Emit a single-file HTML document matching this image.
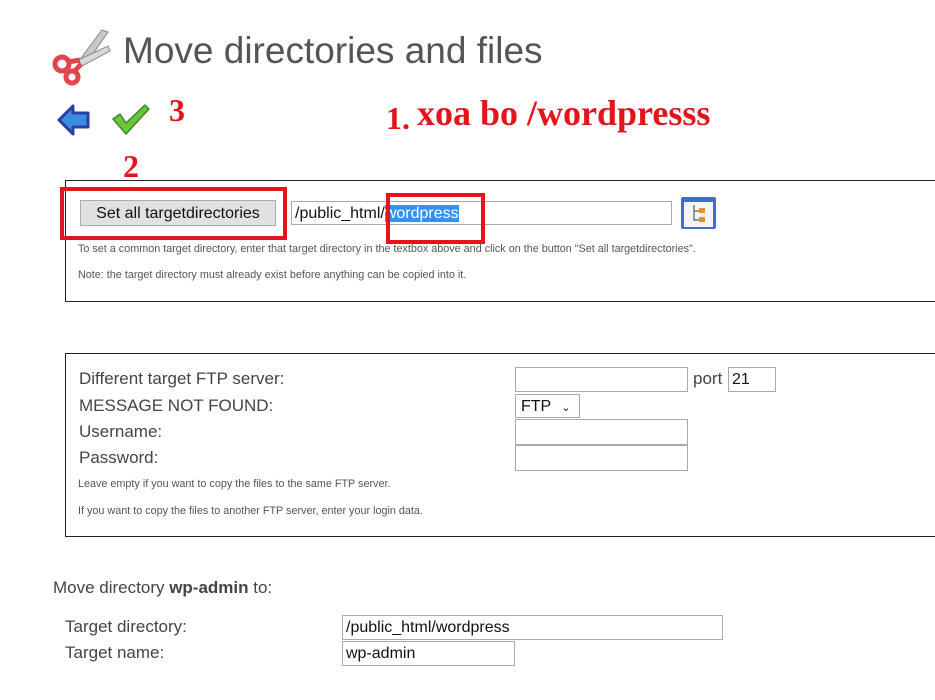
<!DOCTYPE html>
<html><head><meta charset="utf-8"><style>
body{margin:0;width:935px;height:700px;overflow:hidden;background:#fff;font-family:"Liberation Sans",Arial,sans-serif;color:#444;position:relative}
.a{position:absolute;white-space:nowrap}
.red{color:#e5131b;font-family:"Liberation Serif",serif;font-weight:bold}
.box{position:absolute;border:1px solid #222;border-right:none}
.inp{position:absolute;border:1px solid #a9a9a9;background:#fff;box-sizing:border-box;font-size:16px;color:#111;padding-left:3px;line-height:24px}
.sm{font-size:10.8px;color:#555}
.rr{position:absolute;border:4px solid #e5131b;box-sizing:border-box}
.lb{font-size:17px;color:#444}
</style></head><body>
<svg class="a" style="left:50px;top:26px" width="62" height="60" viewBox="0 0 62 60">
<path d="M28 36 L52 4 L58 6 L36 38 Z" fill="#c8c8c8" stroke="#888"/>
<path d="M28 34 L58 20 L60 25 L32 40 Z" fill="#d8d8d8" stroke="#888"/>
<circle cx="12" cy="38" r="7" fill="none" stroke="#e0474c" stroke-width="5"/>
<circle cx="22" cy="51" r="6" fill="none" stroke="#e0474c" stroke-width="5"/>
<path d="M18 36 L30 34 M24 46 L31 38" stroke="#e0474c" stroke-width="5"/>
</svg>
<div class="a" style="left:123px;top:30px;font-size:37px;color:#555">Move directories and files</div>
<svg class="a" style="left:56px;top:103px" width="36" height="34" viewBox="0 0 36 34">
<path d="M3 17 L17 3 L17 10 L32 10 L32 24 L17 24 L17 31 Z" fill="#3a8de0" stroke="#2b3f9e" stroke-width="3" stroke-linejoin="round"/>
</svg>
<svg class="a" style="left:111px;top:102px" width="40" height="34" viewBox="0 0 40 34">
<path d="M2 17 L9 12 L15 21 L34 3 L38 7 L15 32 Z" fill="#6cc43c" stroke="#3f8a24" stroke-width="1.5" stroke-linejoin="round"/>
</svg>
<div class="a red" style="left:169px;top:92px;font-size:32px">3</div>
<div class="a red" style="left:386px;top:100px;font-size:32px">1.</div>
<div class="a red" style="left:417px;top:92px;font-size:36px">xoa bo /wordpresss</div>
<div class="a red" style="left:123px;top:148px;font-size:32px">2</div>

<div class="box" style="left:65px;top:180px;width:880px;height:120px"></div>
<div class="a" style="left:80px;top:200px;width:196px;height:26px;box-sizing:border-box;background:#e1e1e1;border:1px solid #adadad;font-size:16px;color:#111;text-align:center;line-height:25px">Set all targetdirectories</div>
<div class="inp" style="left:291px;top:201px;width:381px;height:24px;line-height:24px">/public_html/<span style="background:#3390ff;color:#fff">wordpress</span></div>
<div class="rr" style="left:60px;top:187px;width:227px;height:53px"></div>
<div class="rr" style="left:386px;top:193px;width:99px;height:51px"></div>
<svg class="a" style="left:680px;top:196px" width="37" height="34" viewBox="0 0 37 34">
<rect x="1" y="1" width="35" height="32" rx="2" fill="#3d6fd0"/>
<rect x="4" y="6" width="29" height="25" fill="#f4f4f4"/>
<path d="M14 9 V24 H20 M14 15 H20" stroke="#777" stroke-width="1.5" fill="none"/>
<rect x="19" y="12" width="6" height="5" fill="#f08a24"/><rect x="19" y="21" width="6" height="5" fill="#f08a24"/>
</svg>
<div class="a sm" style="left:78px;top:243px">To set a common target directory, enter that target directory in the textbox above and click on the button "Set all targetdirectories".</div>
<div class="a sm" style="left:78px;top:269px">Note: the target directory must already exist before anything can be copied into it.</div>

<div class="box" style="left:65px;top:353px;width:880px;height:182px"></div>
<div class="a lb" style="left:79px;top:369px">Different target FTP server:</div>
<div class="a lb" style="left:79px;top:396px">MESSAGE NOT FOUND:</div>
<div class="a lb" style="left:79px;top:422px">Username:</div>
<div class="a lb" style="left:79px;top:448px">Password:</div>
<div class="inp" style="left:515px;top:367px;width:173px;height:25px"></div>
<div class="a lb" style="left:693px;top:369px">port</div>
<div class="inp" style="left:728px;top:367px;width:48px;height:25px;line-height:24px">21</div>
<div class="inp" style="left:515px;top:394px;width:65px;height:24px;line-height:23px;padding-left:5px">FTP <span style="font-size:11px;margin-left:6px">&#8964;</span></div>
<div class="inp" style="left:515px;top:419px;width:173px;height:26px"></div>
<div class="inp" style="left:515px;top:445px;width:173px;height:26px"></div>
<div class="a sm" style="left:78px;top:478px">Leave empty if you want to copy the files to the same FTP server.</div>
<div class="a sm" style="left:78px;top:505px">If you want to copy the files to another FTP server, enter your login data.</div>

<div class="a lb" style="left:53px;top:578px">Move directory <b>wp-admin</b> to:</div>
<div class="a lb" style="left:65px;top:617px">Target directory:</div>
<div class="a lb" style="left:65px;top:643px">Target name:</div>
<div class="inp" style="left:342px;top:615px;width:381px;height:25px">/public_html/wordpress</div>
<div class="inp" style="left:342px;top:641px;width:173px;height:25px">wp-admin</div>
</body></html>
